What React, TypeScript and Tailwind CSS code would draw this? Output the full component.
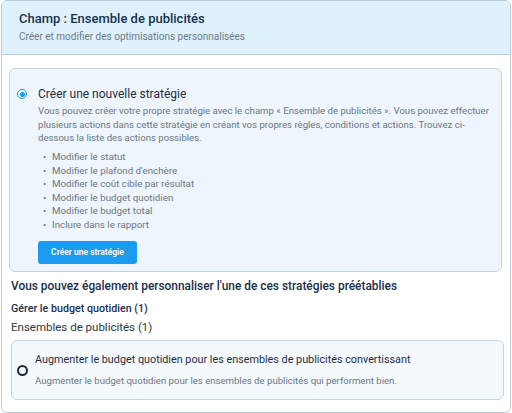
import React from "react";

const actions = [
  "Modifier le statut",
  "Modifier le plafond d'enchère",
  "Modifier le coût cible par résultat",
  "Modifier le budget quotidien",
  "Modifier le budget total",
  "Inclure dans le rapport",
];

const App: React.FC = () => {
  return (
    <div className="w-[512px] h-[413px] bg-white font-['Roboto',sans-serif]">
      <div className="ml-px w-[510px] h-[413px] border border-[#b9cfdc] rounded-md overflow-hidden flex flex-col">
        {/* Header */}
        <div className="bg-[#dff1fd] border-b border-[#b9cfdc] pl-[17px] pt-[8px] h-[54px]">
          <h1 className="text-[13px] font-medium text-[#17324d] leading-[20px]">
            Champ : Ensemble de publicités
          </h1>
          <p className="text-[10px] text-[#6d7a86] leading-[14px] mt-[1px]">
            Créer et modifier des optimisations personnalisées
          </p>
        </div>

        <div className="pl-[7px] pr-[8px] pt-[13px]">
          {/* New strategy card */}
          <div className="bg-[#eef5fd] border border-[#c3d5e2] rounded-md pl-[7px] pr-[4px] pt-[16px] h-[204px]">
            <div className="flex items-start gap-[11px]">
              <span className="mt-[4px] w-[10px] h-[10px] rounded-full border-[1.5px] border-[#1a9bef] flex items-center justify-center shrink-0">
                <span className="w-[5px] h-[5px] rounded-full bg-[#1a9bef]" />
              </span>
              <div className="flex-1">
                <div className="text-[12px] text-[#1f2d3d] leading-[18px]">
                  Créer une nouvelle stratégie
                </div>
                <p className="text-[9.6px] text-[#6b7783] leading-[13.5px] mt-px">
                  Vous pouvez créer votre propre stratégie avec le champ « Ensemble de publicités ». Vous pouvez effectuer plusieurs actions dans cette stratégie en créant vos propres règles, conditions et actions. Trouvez ci-dessous la liste des actions possibles.
                </p>
                <ul className="mt-[5.5px] text-[9.75px] text-[#6b7783] leading-[13.5px]">
                  {actions.map((a) => (
                    <li key={a} className="flex">
                      <span className="w-[14px] pl-[5px]">•</span>
                      <span>{a}</span>
                    </li>
                  ))}
                </ul>
                <button className="mt-[10px] w-[99px] h-[23px] bg-[#1a9bef] rounded-[3px] text-white text-[8.5px] font-semibold">
                  Créer une stratégie
                </button>
              </div>
            </div>
          </div>

          <h2 className="mt-[5px] ml-[2px] text-[11.9px] font-medium text-[#1c2f45] leading-[18px]">
            Vous pouvez également personnaliser l'une de ces stratégies préétablies
          </h2>
          <h3 className="mt-[6px] ml-[2px] text-[10.7px] font-medium text-[#17324d] leading-[16px]">
            Gérer le budget quotidien (1)
          </h3>
          <div className="mt-[3px] ml-[2px] text-[11.5px] text-[#2d3945] leading-[14px]">
            Ensembles de publicités (1)
          </div>

          {/* Preset card */}
          <div className="mt-[6px] ml-[2px] mr-[-2px] bg-[#f4f9fd] border border-[#c3d5e2] rounded-md h-[60px] flex items-center pl-[5px]">
            <span className="w-[11px] h-[11px] rounded-full border-2 border-[#1f2a33] shrink-0 mt-[1px]" />
            <div className="ml-[7px]">
              <div className="text-[10.8px] text-[#1f2d3d] leading-[16px]">
                Augmenter le budget quotidien pour les ensembles de publicités convertissant
              </div>
              <div className="mt-[6px] text-[9.6px] text-[#6b7783] leading-[14px]">
                Augmenter le budget quotidien pour les ensembles de publicités qui performent bien.
              </div>
            </div>
          </div>
        </div>
      </div>
    </div>
  );
};

export default App;
